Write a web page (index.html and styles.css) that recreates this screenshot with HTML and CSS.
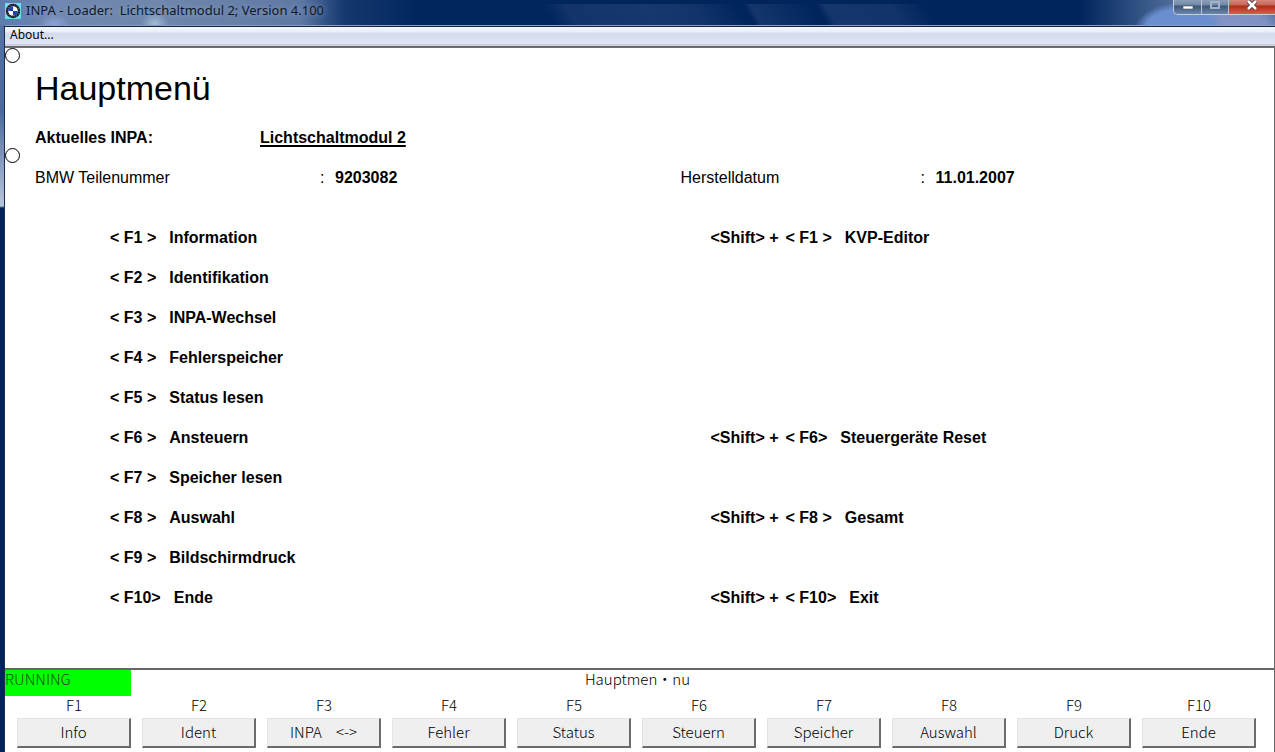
FILE: index.html
```html
<!DOCTYPE html>
<html lang="de">

<head>
    <meta charset="UTF-8">
    <meta name="viewport" content="width=device-width, initial-scale=1.0">
    <title>INPA - Loader: Lichtschaltmodul 2; Version 4.100</title>
    <link rel="stylesheet" href="styles.css">
</head>

<body>
    <header class="titlebar">
        <svg class="logo" width="16" height="16" viewBox="0 0 16 16" aria-hidden="true">
            <rect width="16" height="16" fill="#6fdbe8" />
            <circle cx="8" cy="8" r="7.2" fill="#10131c" />
            <circle cx="8" cy="8" r="6" fill="none" stroke="#a9adb8" stroke-width="0.7" stroke-dasharray="1 1.4" />
            <circle cx="8" cy="8" r="4.8" fill="#fff" />
            <path d="M8 8V3.2A4.8 4.8 0 0 0 3.2 8zM8 8v4.8A4.8 4.8 0 0 0 12.8 8z" fill="#2340b8" />
        </svg>
        <span class="title">INPA - Loader:  Lichtschaltmodul 2; Version 4.100</span>
        <div class="window-buttons">
            <button class="win minimize" aria-label="Minimieren">
                <svg width="12" height="12" viewBox="0 0 12 12">
                    <rect x="1" y="6" width="10" height="3" fill="#fff" stroke="#4b5468" stroke-width="0.6" />
                </svg>
            </button>
            <button class="win maximize" aria-label="Maximieren" disabled>
                <svg width="12" height="12" viewBox="0 0 12 12">
                    <rect x="2" y="2" width="8" height="6" fill="none" stroke="#a3b4ca" stroke-width="2" />
                </svg>
            </button>
            <button class="win close" aria-label="Schließen">
                <svg width="12" height="12" viewBox="0 0 12 12">
                    <path d="M2 1l8 8M10 1l-8 8" stroke="#4d3a44" stroke-width="4.4" />
                    <path d="M2 1l8 8M10 1l-8 8" stroke="#fff" stroke-width="2.6" />
                </svg>
            </button>
        </div>
    </header>

    <div class="window">
        <nav class="menubar">
            <button class="menu-item">About...</button>
        </nav>

        <main class="screen">
            <span class="lamp"></span>
            <span class="lamp lamp-second"></span>
            <h1>Hauptmenü</h1>
            <div class="current">
                <span>Aktuelles INPA:</span>
                <span class="module">Lichtschaltmodul 2</span>
            </div>
            <div class="info">
                <div class="part">
                    <span>BMW Teilenummer</span><span>:</span><b>9203082</b>
                </div>
                <div class="part date">
                    <span>Herstelldatum</span><span>:</span><b>11.01.2007</b>
                </div>
            </div>
            <div class="keys">
                <p><span>&lt; F1 &gt;</span><span>Information</span></p>
                <p><span class="shift">&lt;Shift&gt; +</span><span>&lt; F1 &gt;</span><span>KVP-Editor</span></p>
                <p><span>&lt; F2 &gt;</span><span>Identifikation</span></p>
                <p></p>
                <p><span>&lt; F3 &gt;</span><span>INPA-Wechsel</span></p>
                <p></p>
                <p><span>&lt; F4 &gt;</span><span>Fehlerspeicher</span></p>
                <p></p>
                <p><span>&lt; F5 &gt;</span><span>Status lesen</span></p>
                <p></p>
                <p><span>&lt; F6 &gt;</span><span>Ansteuern</span></p>
                <p><span class="shift">&lt;Shift&gt; +</span><span>&lt; F6&gt;</span><span>Steuergeräte Reset</span></p>
                <p><span>&lt; F7 &gt;</span><span>Speicher lesen</span></p>
                <p></p>
                <p><span>&lt; F8 &gt;</span><span>Auswahl</span></p>
                <p><span class="shift">&lt;Shift&gt; +</span><span>&lt; F8 &gt;</span><span>Gesamt</span></p>
                <p><span>&lt; F9 &gt;</span><span>Bildschirmdruck</span></p>
                <p></p>
                <p><span>&lt; F10&gt;</span><span>Ende</span></p>
                <p><span class="shift">&lt;Shift&gt; +</span><span>&lt; F10&gt;</span><span>Exit</span></p>
            </div>
        </main>

        <footer class="panel">
            <div class="status">
                <span class="running">RUNNING</span>
                <span class="caption">Hauptmen・nu</span>
            </div>
            <div class="fkeys">
                <div class="fkey"><label for="f1">F1</label><button id="f1">Info</button></div>
                <div class="fkey"><label for="f2">F2</label><button id="f2">Ident</button></div>
                <div class="fkey"><label for="f3">F3</label><button id="f3"><span>INPA</span><span>&lt;-&gt;</span></button></div>
                <div class="fkey"><label for="f4">F4</label><button id="f4">Fehler</button></div>
                <div class="fkey"><label for="f5">F5</label><button id="f5">Status</button></div>
                <div class="fkey"><label for="f6">F6</label><button id="f6">Steuern</button></div>
                <div class="fkey"><label for="f7">F7</label><button id="f7">Speicher</button></div>
                <div class="fkey"><label for="f8">F8</label><button id="f8">Auswahl</button></div>
                <div class="fkey"><label for="f9">F9</label><button id="f9">Druck</button></div>
                <div class="fkey"><label for="f10">F10</label><button id="f10">Ende</button></div>
            </div>
        </footer>
    </div>
</body>

</html>
```
FILE: styles.css
```css
* {
    margin: 0;
    padding: 0;
    box-sizing: border-box;
}

body {
    min-height: 100vh;
    display: flex;
    flex-direction: column;
    background: linear-gradient(to bottom, #5a76a8 0, #4a699f 110px, #b9c6dc 206px, #00235b 208px);
    font-family: "Liberation Sans", Arial, sans-serif;
    color: #000;
}

button {
    border: none;
    font: inherit;
    color: inherit;
}

/* title bar */
.titlebar {
    display: flex;
    align-items: flex-start;
    height: 25px;
    padding-left: 5px;
    background:
        radial-gradient(ellipse 45px 26px at right 95px bottom -4px, #6a8fd0 0, #6a8fd0 75%, transparent 100%),
        radial-gradient(ellipse 55px 28px at right 48px bottom -4px, #8595c6 0, #8090c0 75%, transparent 100%),
        radial-gradient(ellipse 16px 10px at 54px 24px, #8fa3d8, transparent),
        radial-gradient(ellipse 14px 12px at 155px 24px, #a3bcd6, transparent),
        linear-gradient(60deg, transparent 480px, #12346a 500px, #16386e 570px, #12346a 610px, transparent 647px, transparent 654px, #14366c 660px, transparent 712px, transparent 717px, #14366c 724px, #12346a 780px, transparent 811px) 0 4px / 100% 21px no-repeat,
        linear-gradient(to right, #5c7cae 0, #7088b0 60px, #6f87ac 160px, #5f79a4 300px, #2d4e83 328px, #15386e 345px, #00265e 420px, #00245c 1080px, #4c6b9a 1170px, #5c78a4 1275px);
}

.logo {
    margin-top: 3px;
    flex: none;
}

.title {
    margin-left: 5px;
    font: 13px/20px "Noto Sans", sans-serif;
    color: #101828;
    white-space: pre;
    text-shadow: 0 0 6px #93a7c6;
}

.window-buttons {
    display: flex;
    height: 15px;
    margin-left: auto;
    border: 1px solid #c3cfdf;
    border-top: none;
    border-right: none;
    border-radius: 0 0 0 5px;
    overflow: hidden;
}

.win {
    display: flex;
    justify-content: center;
    width: 28px;
    border-right: 1px solid #b9c6d8;
    background: linear-gradient(to bottom, #8c9fb9 0, #7288a8 5px, #3c5579 6px, #6d88ac 14px);
}

.maximize {
    width: 27px;
}

.close {
    width: 46px;
    border-right: none;
    background: linear-gradient(to bottom, #d6877c 0, #c96457 5px, #b02c18 6px, #d2634c 14px);
}

/* window frame */
.window {
    flex: 1;
    display: flex;
    flex-direction: column;
    margin-left: 4px;
    border-top: 1px solid #8d9fc0;
    border-left: 1px solid #1c2b4c;
}

.menubar {
    height: 22px;
    border-top: 1px solid #14233f;
    border-bottom: 2px solid #6d6a6e;
    background: linear-gradient(to bottom, #f4f8fe 0, #e8eef8 5px, #d3daec 6px, #dfe5f5 17px, #b4b7c2 18px, #eeeeee 19px);
}

.menu-item {
    display: block;
    padding: 0 5px;
    background: none;
    font: 12px/16px "Noto Sans", sans-serif;
}

/* main screen */
.screen {
    position: relative;
    flex: 1;
    padding: 20px 0 50px 30px;
    background-color: #fff;
    border-right: 1px solid #666;
    font-size: 16px;
    line-height: 40px;
}

.lamp {
    position: absolute;
    top: 0;
    left: 0;
    width: 15px;
    height: 15px;
    border: 1px solid #000;
    border-radius: 50%;
}

.lamp-second {
    top: 100px;
}

.screen h1 {
    font-size: 34px;
    font-weight: 400;
    line-height: 40px;
    margin-bottom: 10px;
}

.current {
    display: grid;
    grid-template-columns: 225px 1fr;
    font-weight: 700;
}

.module {
    text-decoration: underline 2px;
    text-decoration-skip-ink: none;
    text-underline-offset: 2px;
}

.info {
    display: grid;
    grid-template-columns: 645fr 593fr;
}

.part {
    display: grid;
    grid-template-columns: 285px 15px 1fr;
}

.date {
    grid-template-columns: 240px 15px 1fr;
}

.keys {
    display: grid;
    grid-template-columns: 600fr 563fr;
    grid-auto-rows: 40px;
    margin-top: 20px;
    padding-left: 75px;
    font-weight: 700;
}

.keys p {
    display: flex;
    gap: 13px;
}

.keys .shift {
    margin-right: -6px;
}

/* status line and function keys */
.panel {
    padding-bottom: 4px;
    border-top: 2px solid #666;
    border-right: 1px solid #666;
    background-color: #fff;
    font-family: "Noto Sans CJK JP", sans-serif;
    font-size: 15px;
    font-weight: 300;
}

.status {
    display: grid;
    grid-template-columns: 126px 1fr 130px;
    height: 26px;
    line-height: 18px;
}

.running {
    background-color: #00ff00;
    color: #1c4a1c;
}

.caption {
    text-align: center;
}

.fkeys {
    display: grid;
    grid-template-columns: repeat(10, 1fr);
    gap: 11px;
    padding: 0 18px 0 12px;
}

.fkey {
    display: flex;
    flex-direction: column;
    text-align: center;
}

.fkey label {
    height: 22px;
    line-height: 18px;
}

.fkey button {
    display: flex;
    justify-content: center;
    gap: 14px;
    height: 30px;
    line-height: 26px;
    background-color: #efefef;
    border: 1px solid #e3e3e3;
    border-right: 2px solid #6b6b6b;
    border-bottom: 2px solid #6b6b6b;
}
```
